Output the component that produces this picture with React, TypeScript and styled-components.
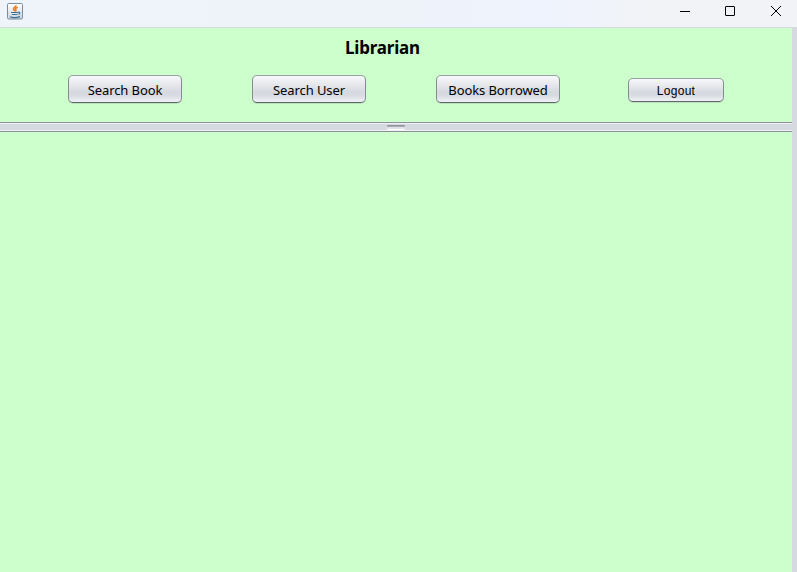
import React from 'react';
import styled, { createGlobalStyle } from 'styled-components';

const GlobalStyle = createGlobalStyle`
  body { margin: 0; overflow: hidden; }
`;

const Window = styled.div`
  width: 797px;
  height: 572px;
  display: flex;
  flex-direction: column;
  background: #d6d9df;
  overflow: hidden;
`;

const TitleBar = styled.header`
  height: 28px;
  flex: none;
  box-sizing: border-box;
  border-bottom: 1px solid #d6d9df;
  display: flex;
  justify-content: space-between;
  background: linear-gradient(90deg, #eef4f9 0%, #eef3fa 50%, #eff3fd 68%, #f1f3f7 82%, #f1f3f6 100%);
`;

const AppIcon = styled.svg`
  width: 16px;
  height: 17px;
  margin: 3px 0 0 7px;
`;

const Controls = styled.div`
  display: flex;
  gap: 34px;
  padding: 5px 15px 0 0;
`;

const ControlIcon = styled.svg`
  width: 12px;
  height: 12px;
  fill: none;
  stroke: #000;
`;

const Content = styled.main`
  width: 792px;
  flex: 1;
  display: flex;
  flex-direction: column;
`;

const Header = styled.section`
  height: 94px;
  box-sizing: border-box;
  background: #ccffcc;
  padding: 8px 0 0 68px;
`;

const Title = styled.h1`
  margin: 0 0 0 277px;
  height: 24px;
  font: 700 17px/24px 'Noto Sans', sans-serif;
  letter-spacing: -0.2px;
  color: #000;
  white-space: nowrap;
`;

const Toolbar = styled.nav`
  display: flex;
  align-items: center;
  height: 28px;
  margin-top: 15px;
`;

const Button = styled.button<{ $width: number; $gap: number; $spacing: number; $compact?: boolean }>`
  width: ${p => p.$width}px;
  height: ${p => (p.$compact ? 24 : 28)}px;
  margin: ${p => (p.$compact ? 2 : 0)}px ${p => p.$gap}px 0 0;
  padding: ${p => (p.$compact ? 1 : 2)}px 0 0;
  box-sizing: border-box;
  flex: none;
  border: 1px solid #8b8f96;
  border-color: #999da4 #868a91 #60646b;
  border-radius: 5px;
  background: linear-gradient(#f7f8fa 0%, #e5e7eb 35%, #d6d9df 60%, #d8dbe1 75%, #f0f2f6 100%);
  box-shadow: 0 1px 0 #b9e5bc;
  color: #000;
  font-family: ${p => (p.$compact ? "'Liberation Sans'" : "'Noto Sans'")}, sans-serif;
  font-size: ${p => (p.$compact ? 12 : 13)}px;
  line-height: 18px;
  letter-spacing: ${p => p.$spacing}px;
  white-space: nowrap;
`;

const Splitter = styled.div`
  height: 10px;
  flex: none;
  box-sizing: border-box;
  display: flex;
  justify-content: center;
  padding-top: 2px;
  border-top: 1px solid #8c909c;
  border-bottom: 1px solid #8c909c;
  box-shadow: inset 0 1px #eff0f3, inset 0 -1px #eff0f3;
  background: #d6d9df;
`;

const Grip = styled.span`
  width: 18px;
  height: 5px;
  box-sizing: border-box;
  border-top: 1px solid #8e929e;
  border-bottom: 1px solid #fff;
  border-radius: 1px;
  background: linear-gradient(#a9acb8 34%, #dfe1e6 34%);
`;

const Workspace = styled.section`
  flex: 1;
  background: #ccffcc;
`;

const JavaIcon = () => (
  <AppIcon viewBox="0 0 16 17">
    <defs>
      <linearGradient id="iconFace" x1="0" y1="0" x2="0" y2="1">
        <stop offset="0" stopColor="#ffffff" />
        <stop offset="1" stopColor="#cbd6df" />
      </linearGradient>
    </defs>
    <rect x=".5" y=".5" width="15" height="15.5" rx="1.2" fill="url(#iconFace)" stroke="#7b8c9d" />
    <path d="M8.8 2.2C9.5 4 6 4.7 6.5 6.2c.2.8 1 1.2 1.2 2.2M10.7 4.2C8.5 5 8 6 8.8 6.8c.4.5.1 1.2-.3 1.6" fill="none" stroke="#ee7a1c" strokeWidth="1.5" />
    <path d="M4 9.5h7M5 11.5h5.5M3 13.8c2.5 1 7 .9 10-.2M11.2 9.3c2.2-.6 2 1.5.2 2" fill="none" stroke="#3f7195" strokeWidth="1.2" />
  </AppIcon>
);

export default function App() {
  return (
    <>
      <GlobalStyle />
      <Window>
        <TitleBar>
          <JavaIcon />
          <Controls>
            <ControlIcon viewBox="0 0 12 12"><path d="M2 6.5h10" /></ControlIcon>
            <ControlIcon viewBox="0 0 12 12"><rect x="1.5" y="1.5" width="9" height="9" rx=".4" /></ControlIcon>
            <ControlIcon viewBox="0 0 12 12"><path d="M1 1l10 10M11 1L1 11" /></ControlIcon>
          </Controls>
        </TitleBar>
        <Content>
          <Header>
            <Title>Librarian</Title>
            <Toolbar>
              <Button $width={114} $gap={70} $spacing={-0.1}>Search Book</Button>
              <Button $width={114} $gap={70} $spacing={-0.1}>Search User</Button>
              <Button $width={124} $gap={68} $spacing={-0.1}>Books Borrowed</Button>
              <Button $width={96} $gap={0} $spacing={0.3} $compact>Logout</Button>
            </Toolbar>
          </Header>
          <Splitter><Grip /></Splitter>
          <Workspace />
        </Content>
      </Window>
    </>
  );
}
